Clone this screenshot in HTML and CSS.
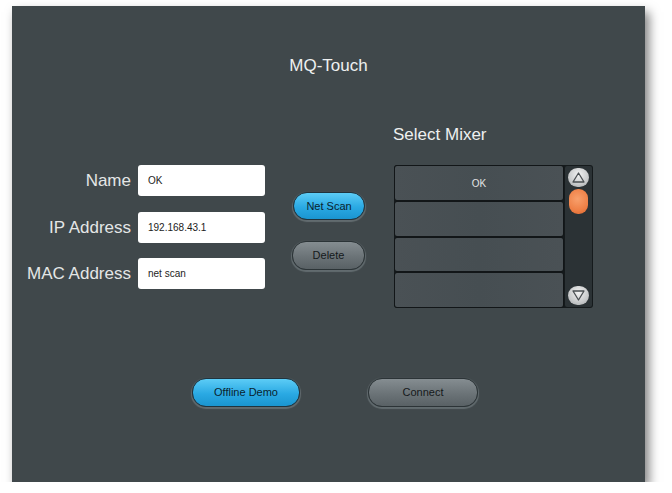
FILE: index.html
```html
<!DOCTYPE html>
<html>
	<head>
<meta charset="UTF-8">
<title>MQ-Touch</title>
<link rel="stylesheet" href="styles.css">
	</head>
	<body>
        <div class="panel">
            <div class="title">MQ-Touch</div>
            <div class="middle">
                <div class="form">
                    <div class="regel">
                        <div class="label">Name</div>
                        <div class="field">OK</div>
                    </div>
                    <div class="regel">
                        <div class="label">IP Address</div>
                        <div class="field">192.168.43.1</div>
                    </div>
                    <div class="regel">
                        <div class="label">MAC Address</div>
                        <div class="field">net scan</div>
                    </div>
                </div>
                <div class="actions">
                    <div class="knop blue">Net Scan</div>
                    <div class="knop gray delete">Delete</div>
                </div>
                <div class="mixer">
                    <div class="mixer-title">Select Mixer</div>
                    <div class="mixer-box">
                        <div class="rows">
                            <div class="row">OK</div>
                            <div class="row"></div>
                            <div class="row"></div>
                            <div class="row"></div>
                        </div>
                        <div class="scroll">
                            <div class="arrow">
                                <svg width="13" height="11" viewBox="0 0 13 11"><path d="M6.5 1 L12 10 L1 10 Z" fill="none" stroke="#4a4f52" stroke-width="1.3" stroke-linejoin="round"/></svg>
                            </div>
                            <div class="thumb"></div>
                            <div class="track"></div>
                            <div class="arrow">
                                <svg width="13" height="11" viewBox="0 0 13 11"><path d="M6.5 10 L12 1 L1 1 Z" fill="none" stroke="#4a4f52" stroke-width="1.3" stroke-linejoin="round"/></svg>
                            </div>
                        </div>
                    </div>
                </div>
            </div>
            <div class="bottom">
                <div class="knop blue wide">Offline Demo</div>
                <div class="knop gray wide connect">Connect</div>
            </div>
        </div>
	</body>
</html>
```

FILE: styles.css
```css
body {
    margin: 0;
    background: #fff;
    font-family: "Liberation Sans", Helvetica, Arial, sans-serif;
}
.panel {
    margin: 6px 0 0 12px;
    width: 633px;
    height: 476px;
    background: #40484b;
    box-shadow: 4px 6px 10px rgba(0, 0, 0, 0.5);
}
.title {
    padding-top: 50px;
    line-height: 20px;
    font-size: 17px;
    text-align: center;
    color: #eef0f0;
}
.middle {
    display: flex;
    margin-top: 49px;
}
.form {
    display: flex;
    flex-direction: column;
    gap: 15.5px;
    padding-top: 40px;
}
.regel {
    display: flex;
    gap: 7px;
}
.label {
    width: 119px;
    text-align: right;
    font-size: 17px;
    line-height: 31px;
    color: #e4e6e6;
}
.field {
    width: 117px;
    height: 31px;
    padding-left: 10px;
    background: #fff;
    border-radius: 3px;
    font-size: 10px;
    line-height: 31px;
    color: #1c1c1c;
}
.actions {
    display: flex;
    flex-direction: column;
    gap: 21px;
    padding: 27px 0 0 28px;
    margin-top: 40px;
}
.knop {
    width: 70px;
    height: 26px;
    border-radius: 14px;
    font-size: 11px;
    line-height: 26px;
    text-align: center;
    border: 1px solid #20343e;
    box-shadow: 0 1px 1px 1px rgba(140, 150, 155, 0.45);
}
.blue {
    background: linear-gradient(#5cccf6, #2aa9e3 55%, #1a95d0);
    color: #0a1f2e;
}
.gray {
    background: linear-gradient(#858d91, #6b7377 55%, #596165);
    color: #15191b;
    border-color: #2c3437;
}
.delete {
    height: 27px;
    line-height: 27px;
    width: 71px;
    margin-left: -1px;
}
.mixer {
    margin-left: 29px;
}
.mixer-title {
    line-height: 20px;
    font-size: 17px;
    color: #eef0f0;
    margin-bottom: 20px;
    margin-left: -1px;
}
.mixer-box {
    display: flex;
    width: 199px;
    height: 143px;
    background: #151a1c;
    border-radius: 3px;
}
.rows {
    display: flex;
    flex-direction: column;
    width: 170px;
}
.row {
    flex: 1;
    background: linear-gradient(90deg, #4a5155, #464e52 50%, #4a5155);
    border: 1px solid #121618;
    border-radius: 3px;
    font-size: 10px;
    color: #e2e4e4;
    text-align: center;
    padding-top: 12px;
    box-sizing: border-box;
}
.scroll {
    display: flex;
    flex-direction: column;
    align-items: center;
    width: 27px;
    margin: 1px;
    padding: 2px 0;
    background: #2b3235;
    border-radius: 2px;
}
.arrow {
    width: 21px;
    height: 19px;
    border-radius: 10px;
    background: radial-gradient(circle at 50% 35%, #f2f2f2, #c8cacb 60%, #9ea2a4);
    display: flex;
    align-items: center;
    justify-content: center;
}
.thumb {
    margin-top: 2px;
    width: 19px;
    height: 25px;
    border-radius: 9px;
    background: radial-gradient(circle at 45% 40%, #f8a06c, #ee7e44 65%, #d7652f);
}
.track {
    flex: 1;
}
.bottom {
    display: flex;
    gap: 68px;
    margin-top: 70px;
    padding-left: 180px;
}
.wide {
    width: 106px;
    height: 27px;
    line-height: 27px;
    font-size: 11px;
}
.connect {
    width: 108px;
}
```
